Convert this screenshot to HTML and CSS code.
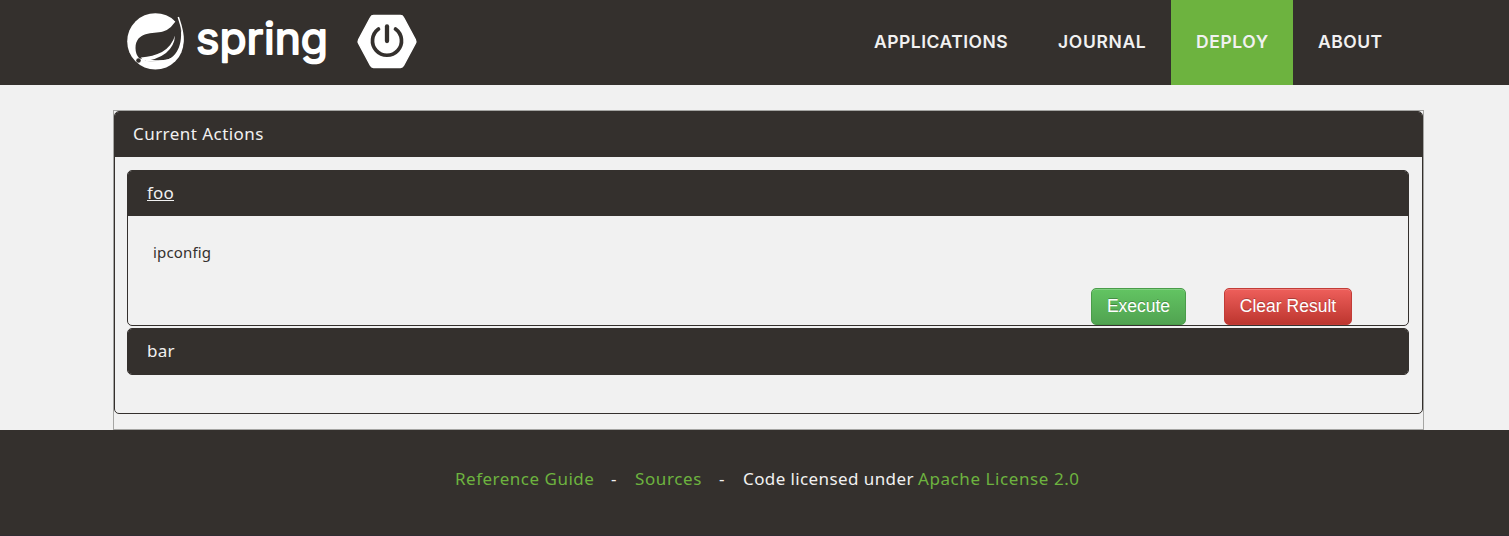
FILE: index.html
```html
<!DOCTYPE html>
<html lang="en">
<head>
<meta charset="utf-8">
<title>Deploy</title>
<link rel="stylesheet" href="styles.css">
</head>
<body>
<header class="navbar">
  <a class="brand">
    <svg class="leaf" width="60" height="60" viewBox="0 0 60 60">
      <circle cx="29.400" cy="30.400" r="28.200" fill="#fff"/>
      <path d="M50 0L60 0V22L57 20L52.300 5.500L48 10Z" fill="#34302d"/>
      <path d="M52.300 5.500Q46 18 37 20.500C27 23 10 20 9.500 37Q9.500 43 13 47L21 50Q34 51 42 48.500C53 44 59 28 52.300 5.500Z" fill="#34302d"/>
      <path d="M52.300 6C55 14 57.500 21 57 29C56 40 50 47 42 49C34 51 27 49.500 20 49.500" fill="none" stroke="#fff" stroke-width="1.500"/>
      <path d="M49 24.500Q46 35 36 41Q27 45.500 15 46.500L17 50Q31 49 40 42Q48.500 35 49 24.500Z" fill="#fff"/>
      <circle cx="12.500" cy="49.500" r="2.300" fill="#34302d"/>
    </svg>
    <svg class="wordmark" width="140" height="72" viewBox="0 0 140 72">
      <text x="2" y="43" textLength="132" lengthAdjust="spacingAndGlyphs">spring</text>
    </svg>
    <svg class="power" width="62" height="60" viewBox="0 0 62 60">
      <path d="M17.500 4.500H44.500Q46.500 4.500 47.500 6.500L59.300 28.500Q60.300 30.500 59.300 32.500L47.500 54.500Q46.500 56.500 44.500 56.500H17.500Q15.500 56.500 14.500 54.500L2.700 32.500Q1.700 30.500 2.700 28.500L14.500 6.500Q15.500 4.500 17.500 4.500Z" fill="#fff" stroke="#fff" stroke-width="1.500"/>
      <path d="M22.500 18A14.500 14.500 0 1 0 39.500 18" fill="none" stroke="#34302d" stroke-width="3.700" stroke-linecap="round"/>
      <path d="M31 15.500V30" stroke="#34302d" stroke-width="4.300" stroke-linecap="round"/>
    </svg>
  </a>
  <nav class="menu">
    <a class="item applications">APPLICATIONS</a>
    <a class="item journal">JOURNAL</a>
    <a class="item deploy active">DEPLOY</a>
    <a class="item about">ABOUT</a>
  </nav>
</header>
<main class="content">
  <section class="panel outer">
    <h1 class="title heading">Current Actions</h1>
    <div class="actions">
      <section class="panel action">
        <h2 class="title"><u>foo</u></h2>
        <div class="details">
          <p class="command">ipconfig</p>
          <div class="buttons">
            <button class="btn execute">Execute</button>
            <button class="btn clear">Clear Result</button>
          </div>
        </div>
      </section>
      <section class="panel action">
        <h2 class="title">bar</h2>
      </section>
    </div>
  </section>
</main>
<footer class="footer">
  <a class="link guide">Reference Guide</a><span class="dash">-</span><a class="link sources">Sources</a><span class="dash">-</span><span class="license">Code licensed under</span><a class="link apache">Apache License 2.0</a>
</footer>
</body>
</html>
```
FILE: styles.css
```css
* { box-sizing: border-box; }
body {
  margin: 0;
  background: #f1f1f1;
  color: #34302d;
  font-family: "Noto Sans", sans-serif;
}
.navbar {
  display: flex;
  justify-content: space-between;
  height: 85px;
  padding: 0 102px 0 126px;
  background: #34302d;
}
.brand { display: flex; padding-top: 11px; }
.wordmark { margin-left: 8px; overflow: visible; }
.wordmark text {
  font: 43px Inter, sans-serif;
  fill: #fff;
  stroke: #fff;
  stroke-width: 1.8px;
  stroke-linejoin: round;
}
.power { margin-left: 22px; }
.menu { display: flex; }
.item {
  padding-left: 25px;
  color: #f1f1f1;
  font: 600 17.5px/84px Inter, sans-serif;
  letter-spacing: .5px;
  white-space: nowrap;
}
.applications { width: 184px; }
.journal { width: 138px; letter-spacing: .65px; }
.deploy { width: 122px; letter-spacing: .6px; }
.about { width: 114px; }
.active { background: #6db33f; }
.content {
  width: 1311px;
  height: 320px;
  margin: 25px 0 0 113px;
  border: 1px solid #a5a5a3;
}
.panel {
  border: 1px solid #34302d;
  border-radius: 5px;
  overflow: hidden;
}
.outer { height: 303px; }
.title {
  height: 45px;
  margin: 0;
  padding-left: 19px;
  background: #34302d;
  color: #f1f1f1;
  font-size: 17px;
  font-weight: 400;
  line-height: 44px;
  letter-spacing: .2px;
}
.heading { padding-left: 18px; letter-spacing: .45px; }
.actions {
  display: flex;
  flex-direction: column;
  gap: 2px;
  padding: 13px 13px 0 12px;
}
.details { height: 109px; padding: 24px 56px 0 25px; }
.command {
  margin: 0;
  font-size: 15px;
  line-height: 24px;
  letter-spacing: .15px;
}
.buttons {
  display: flex;
  justify-content: flex-end;
  gap: 38px;
  margin-top: 24px;
}
.btn {
  height: 37px;
  padding: 0;
  border: 1px solid #4a9c4a;
  border-radius: 5px;
  color: #fff;
  font: 17.5px "Liberation Sans", sans-serif;
  text-shadow: 0 -1px 0 rgba(0, 0, 0, .25);
  box-shadow: inset 0 1px 0 rgba(255, 255, 255, .2);
}
.execute { width: 95px; background: linear-gradient(#62c462, #51a351); }
.clear {
  width: 128px;
  border-color: #c23c37;
  background: linear-gradient(#ee5f5b, #bd362f);
}
.footer {
  display: flex;
  height: 106px;
  padding-left: 455px;
  border-bottom: 1px solid #302d32;
  background: #34302d;
  color: #f1f1f1;
  font-size: 17px;
  line-height: 97px;
  letter-spacing: .5px;
  white-space: nowrap;
}
.link { color: #6db33f; }
.guide { width: 156px; }
.dash { width: 24px; }
.sources { width: 84px; letter-spacing: .6px; }
.license { width: 175px; letter-spacing: .4px; }
.apache { letter-spacing: .58px; }
```
